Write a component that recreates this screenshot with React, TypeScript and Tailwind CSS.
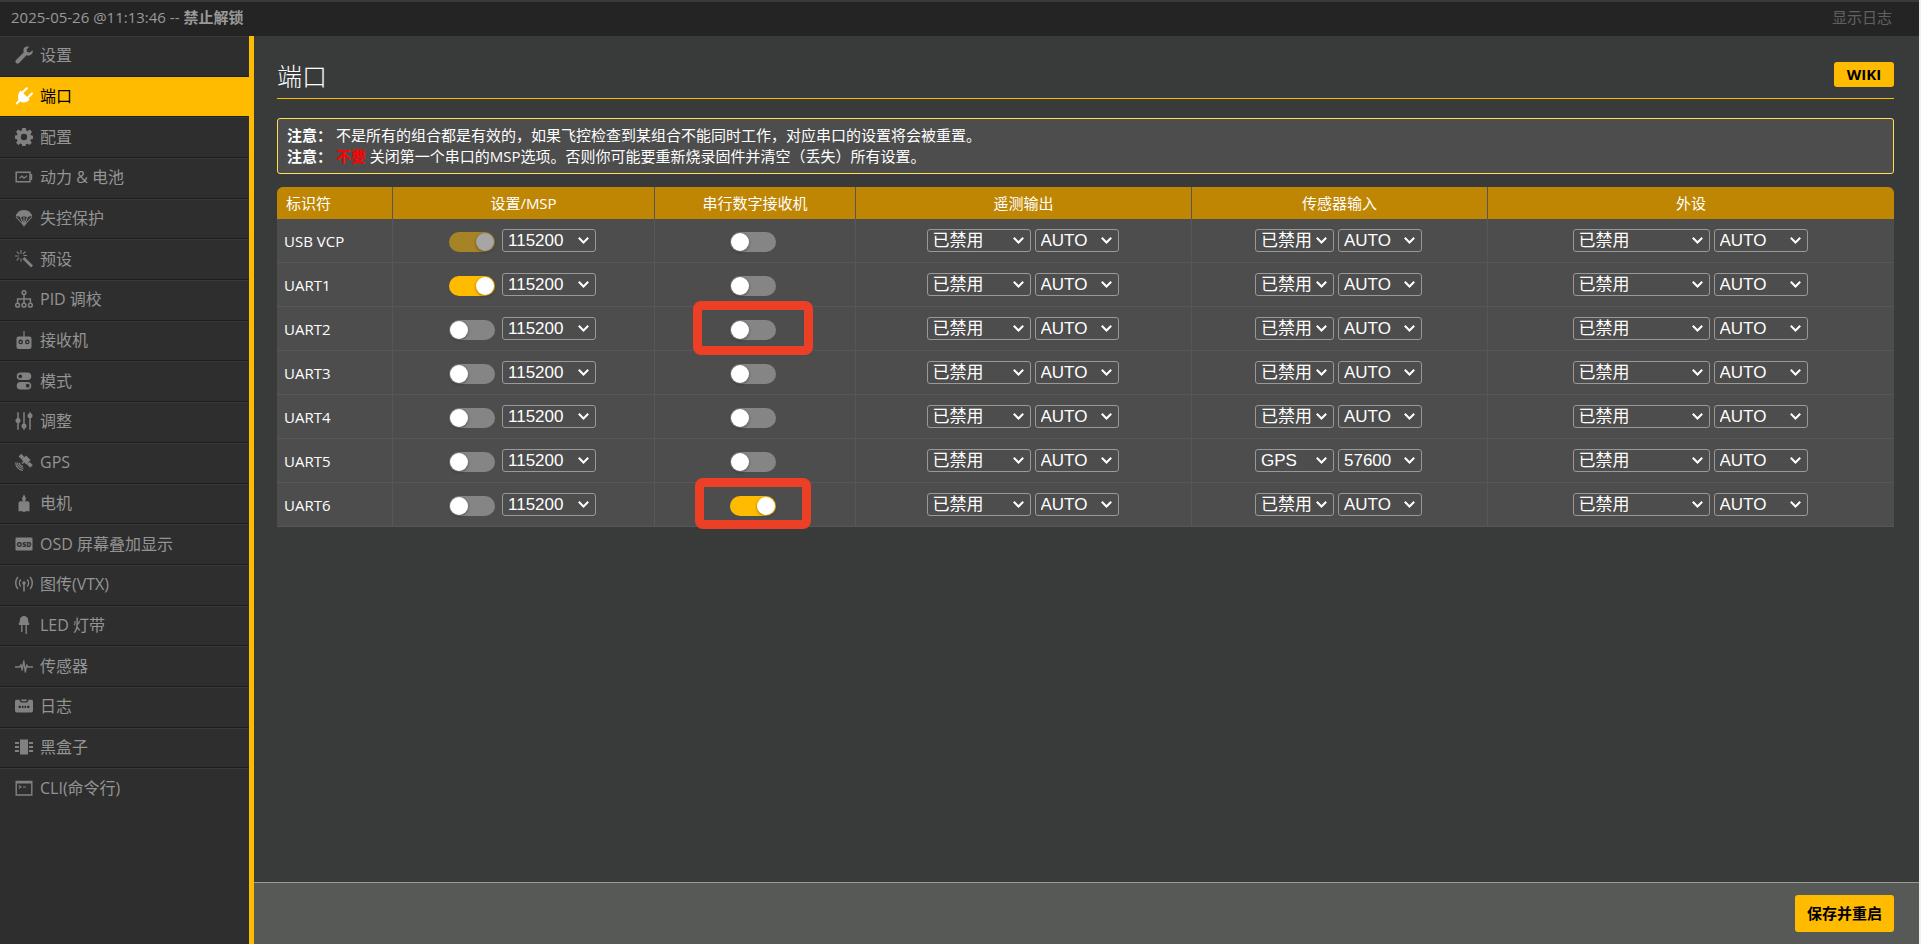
import type { ReactNode } from "react";

type NavItem = {
  label: string;
  icon: ReactNode;
};

type PortRow = {
  id: string;
  msp: boolean;
  mspLocked?: boolean;
  serialRx: boolean;
  sensor: string;
  sensorBaud: string;
  highlight?: string;
};

const navItems: NavItem[] = [
  {
    label: "设置",
    icon: (
      <path d="M17.6 4.2 14.8 6.6 12.2 6 11.6 3.6 14.2.8C12 0 9.6.8 8.7 2.8 8.2 4.1 8.4 5.3 8.8 6.3L1 13.9C.2 14.8.2 16.1 1 16.9 1.9 17.8 3.2 17.8 4.1 16.9L11.5 9.2C13 9.9 15.1 9.7 16.5 8.3 17.7 7.1 18 5.6 17.6 4.2Z" />
    ),
  },
  {
    label: "端口",
    icon: (
      <>
        <path d="M5.6 3.6 14.6 12.4C12.7 15 8.5 16.6 5.2 14.5L2.4 17.2C1.6 17.9.2 16.6.9 15.7L3.5 13C2.3 9.7 3.2 6.1 5.6 3.6Z" />
        <path d="M8 5 11.8 1.3M13.2 10.2 17 6.5" fill="none" stroke="currentColor" strokeWidth="2.2" strokeLinecap="round" />
      </>
    ),
  },
  {
    label: "配置",
    icon: (
      <path
        fillRule="evenodd"
        d="M7.2 0h3.6l.5 2.5 1.4.6L14.9 1.6 17 4 15.5 6l.5 1.3 2 .4v3.1l-2.2.6-.5 1.3 1.5 2.1-2.2 2.3-2.1-1.4-1.5.6-.5 1.7H7.3l-.5-1.9-1.4-.6-2.1 1.4-2.2-2.2 1.4-2.2-.6-1.3L0 10.8V7.6l2-.4.5-1.3L1.1 3.8l2.2-2.2 2 1.5 1.4-.6ZM9 5.8A3.2 3.2 0 1 0 9 12.2 3.2 3.2 0 1 0 9 5.8Z"
      />
    ),
  },
  {
    label: "动力 & 电池",
    icon: (
      <>
        <path d="M1.2 4.2H15V13.8H1.2Z" fill="none" stroke="currentColor" strokeWidth="1.5" />
        <path d="M15.5 6h1.7v6h-1.7Z" />
        <path d="M4.5 10.2 7 8 9 10.2 12 7.8" fill="none" stroke="currentColor" strokeWidth="1.2" />
      </>
    ),
  },
  {
    label: "失控保护",
    icon: (
      <>
        <path d="M.7 7.8C1.2 3.8 4.5 1 9 1s7.8 2.8 8.3 6.8L15 7.2l-2.5 1L9 7.2l-3.5 1L3 7.2Z" />
        <path d="M1.2 8 9 16.5 16.8 8M5.5 8 9 16.5 12.5 8M9 7.5V16" fill="none" stroke="currentColor" strokeWidth="1.1" />
        <path d="M7.4 14.3H10.6L9 17.3Z" />
      </>
    ),
  },
  {
    label: "预设",
    icon: (
      <>
        <path d="M8.5 8 17 16.6" fill="none" stroke="currentColor" strokeWidth="2.8" />
        <path
          d="M6 0V3.8M6 8.5V11.5M0 6H3.5M8.5 5.5H12M1.8 1.7 4.3 4.2M10.5 1.5 8 4M1.6 10.3 4.2 7.7"
          fill="none"
          stroke="currentColor"
          strokeWidth="1.1"
        />
      </>
    ),
  },
  {
    label: "PID 调校",
    icon: (
      <g fill="none" stroke="currentColor" strokeWidth="1.5">
        <circle cx="9" cy="2.6" r="1.9" />
        <circle cx="2.6" cy="15.2" r="1.9" />
        <circle cx="9" cy="15.2" r="1.9" />
        <circle cx="15.4" cy="15.2" r="1.9" />
        <path d="M9 4.5V13.3M2.6 13.3V9H15.4V13.3" />
      </g>
    ),
  },
  {
    label: "接收机",
    icon: (
      <>
        <path d="M9 0V6" stroke="currentColor" strokeWidth="1.2" />
        <path
          fillRule="evenodd"
          d="M3.5 5.5h11a2 2 0 0 1 2 2V16a2 2 0 0 1-2 2h-11a2 2 0 0 1-2-2V7.5a2 2 0 0 1 2-2ZM5.7 8.6a2.3 2.3 0 1 0 0 4.6 2.3 2.3 0 1 0 0-4.6ZM12.3 8.6a2.3 2.3 0 1 0 0 4.6 2.3 2.3 0 1 0 0-4.6Z"
        />
        <circle cx="5.7" cy="10.9" r="1" />
        <circle cx="12.3" cy="10.9" r="1" />
      </>
    ),
  },
  {
    label: "模式",
    icon: (
      <path
        fillRule="evenodd"
        d="M5.5.5h7a3.8 3.8 0 0 1 0 7.6h-7a3.8 3.8 0 0 1 0-7.6ZM5.3 2.4a1.9 1.9 0 1 0 0 3.8 1.9 1.9 0 1 0 0-3.8ZM5.5 9.9h7a3.8 3.8 0 0 1 0 7.6h-7a3.8 3.8 0 0 1 0-7.6ZM12.7 11.8a1.9 1.9 0 1 0 0 3.8 1.9 1.9 0 1 0 0-3.8Z"
      />
    ),
  },
  {
    label: "调整",
    icon: (
      <>
        <path d="M3 .3V17.7M9 .3V17.7M15 .3V17.7" stroke="currentColor" strokeWidth="1.5" />
        <circle cx="3" cy="8.5" r="2.5" />
        <circle cx="9" cy="14" r="2.5" />
        <circle cx="15" cy="3.8" r="2.5" />
      </>
    ),
  },
  {
    label: "GPS",
    icon: (
      <>
        <path d="M6.2.8 9.4 4 6.8 6.6 3.6 3.4ZM14.6 8.9l3.2 3.2-2.6 2.6-3.2-3.2ZM11 2.5l4.6 4.6-4.2 4.5L6.8 7Z" />
        <path d="M7.5 5.2 13 10.7M7 10.5 10 8" stroke="currentColor" strokeWidth="1.6" />
        <path
          d="M4.5 9.8A3.6 3.6 0 0 0 8 13.4M2.5 9.5A6 6 0 0 0 8.3 15.4M.7 9.5A8 8 0 0 0 8 17.4"
          fill="none"
          stroke="currentColor"
          strokeWidth="1.2"
        />
      </>
    ),
  },
  {
    label: "电机",
    icon: (
      <>
        <path d="M9 .2 11 4.5 10.2 7.5H7.8L7 4.5Z" />
        <path d="M5.5 7.3h7a2 2 0 0 1 2 2v8h-11v-8a2 2 0 0 1 2-2ZM8 17h2v1H8Z" />
      </>
    ),
  },
  {
    label: "OSD 屏幕叠加显示",
    icon: (
      <>
        <rect x="0.5" y="2.5" width="17" height="13" rx="1.2" />
        <text x="9" y="11.8" textAnchor="middle" className="fill-[#2e2e2e] font-['Open_Sans'] text-[7px] font-extrabold">
          OSD
        </text>
      </>
    ),
  },
  {
    label: "图传(VTX)",
    icon: (
      <>
        <circle cx="9" cy="8" r="1.8" />
        <path d="M9 9V16.5" stroke="currentColor" strokeWidth="1.6" />
        <path
          d="M5.8 4.6A5 5 0 0 0 5.8 11.4M12.2 4.6A5 5 0 0 1 12.2 11.4M3 2A9 9 0 0 0 3 14M15 2A9 9 0 0 1 15 14"
          fill="none"
          stroke="currentColor"
          strokeWidth="1.5"
        />
      </>
    ),
  },
  {
    label: "LED 灯带",
    icon: (
      <>
        <path d="M4.8 6.5V4.2a4.2 4.2 0 0 1 8.4 0V6.5h1V9H3.8V6.5Z" />
        <path d="M6.8 9V16M11.2 9V18" stroke="currentColor" strokeWidth="1.4" />
      </>
    ),
  },
  {
    label: "传感器",
    icon: (
      <path
        d="M0 10H4.8L6 7.6 7.2 13 8.8 4 10.3 15 11.8 8 12.8 10H18"
        fill="none"
        stroke="currentColor"
        strokeWidth="1.4"
        strokeLinejoin="round"
      />
    ),
  },
  {
    label: "日志",
    icon: (
      <>
        <path
          fillRule="evenodd"
          d="M1.5 2.8h2.7L5.8 5.5h6.4l1.6-2.7h2.7A1.5 1.5 0 0 1 18 4.3V13.5a2 2 0 0 1-2 2H2a2 2 0 0 1-2-2V4.3a1.5 1.5 0 0 1 1.5-1.5ZM3.6 8.8v2.2h2.2V8.8ZM6.9 8.8v2.2h1.6V8.8ZM9.5 8.8v2.2h1.6V8.8ZM12.2 8.8v2.2h2.2V8.8Z"
        />
        <path d="M6 2.5H12L11.3 4.3H6.7Z" />
      </>
    ),
  },
  {
    label: "黑盒子",
    icon: (
      <>
        <rect x="5" y="1.5" width="8" height="15" />
        <path d="M0 5H4M0 9H4M0 13H4M14 5H18M14 9H18M14 13H18" stroke="currentColor" strokeWidth="1.8" />
      </>
    ),
  },
  {
    label: "CLI(命令行)",
    icon: (
      <>
        <path d="M1.2 2.5H16.8V16H1.2Z" fill="none" stroke="currentColor" strokeWidth="1.4" />
        <path d="M1 2H17V4.5H1Z" />
        <path d="M3.8 6.5 6 8 3.8 9.5M8 8H11" fill="none" stroke="currentColor" strokeWidth="1.1" />
      </>
    ),
  },
];

const ports: PortRow[] = [
  { id: "USB VCP", msp: true, mspLocked: true, serialRx: false, sensor: "已禁用", sensorBaud: "AUTO" },
  { id: "UART1", msp: true, serialRx: false, sensor: "已禁用", sensorBaud: "AUTO" },
  {
    id: "UART2",
    msp: false,
    serialRx: false,
    sensor: "已禁用",
    sensorBaud: "AUTO",
    highlight: "-left-[37px] -right-[37px] -top-[19px] -bottom-[15px]",
  },
  { id: "UART3", msp: false, serialRx: false, sensor: "已禁用", sensorBaud: "AUTO" },
  { id: "UART4", msp: false, serialRx: false, sensor: "已禁用", sensorBaud: "AUTO" },
  { id: "UART5", msp: false, serialRx: false, sensor: "GPS", sensorBaud: "57600" },
  {
    id: "UART6",
    msp: false,
    serialRx: true,
    sensor: "已禁用",
    sensorBaud: "AUTO",
    highlight: "-left-[35px] -right-[35px] -top-[18px] -bottom-[13px]",
  },
];

function Toggle({
  label,
  checked,
  disabled = false,
  highlight,
}: {
  label: string;
  checked: boolean;
  disabled?: boolean;
  highlight?: string;
}) {
  return (
    <label className="relative mr-[3px] block h-5 w-[46px]">
      <input
        type="checkbox"
        aria-label={label}
        defaultChecked={checked}
        disabled={disabled}
        className="peer block h-5 w-[46px] appearance-none rounded-full bg-[#858585] checked:bg-[#ffbb00] disabled:opacity-50"
      />
      <span className="pointer-events-none absolute left-px top-px size-[18px] rounded-full bg-white shadow-[0_1px_3px_rgba(0,0,0,0.4)] peer-checked:left-[27px] peer-disabled:bg-[#a6a6a6]" />
      {highlight ? (
        <span className={`pointer-events-none absolute z-10 rounded-lg border-9 border-[#ec4026] ${highlight}`} />
      ) : null}
    </label>
  );
}

function Select({ label, value, width }: { label: string; value: string; width: string }) {
  return (
    <div className={`relative h-[23px] ${width}`}>
      <select
        aria-label={label}
        defaultValue={value}
        className="block h-full w-full appearance-none rounded-[3px] border border-[#999] bg-[#4d4d4d] pl-[5px] font-['Liberation_Sans','Noto_Sans_CJK_SC',sans-serif] text-[17px] leading-5 text-white"
      >
        <option>{value}</option>
      </select>
      <svg
        viewBox="0 0 11 7"
        aria-hidden="true"
        className="pointer-events-none absolute right-[7px] top-2 h-[7px] w-[11px] fill-none stroke-white stroke-2"
      >
        <path d="M.8.8 5.5 5.5 10.2.8" />
      </svg>
    </div>
  );
}

function Cell({ children }: { children: ReactNode }) {
  return (
    <td className="border-b border-l border-[#575757] py-0 pl-0 pr-[2px]">
      <div className="flex h-[23px] items-end justify-center gap-1">{children}</div>
    </td>
  );
}

export default function App() {
  return (
    <div className="flex min-h-screen flex-col border-r-2 border-[#f0f0f0] bg-[#393b3a] font-['Open_Sans','Noto_Sans_CJK_SC',sans-serif] text-[15px] text-white">
      <header className="flex h-9 items-center justify-between border-t-2 border-[#393939] bg-[#242424] pb-[3px] pl-[11px] pr-[27px]">
        <p className="text-[#999]">
          2025-05-26 @11:13:46 -- <strong>禁止解锁</strong>
        </p>
        <button type="button" className="text-[#616161]">
          显示日志
        </button>
      </header>

      <div className="flex flex-1">
        <nav className="w-[254px] shrink-0 border-r-5 border-[#ffbb00] bg-[#2e2e2e]">
          <ul className="grid h-[773px] auto-rows-fr">
            {navItems.map((item, index) => (
              <li
                key={item.label}
                className={
                  index === 1
                    ? "border-b border-[#1e1e1e] bg-[#ffbb00] text-black"
                    : "border-b border-t border-b-[#1e1e1e] border-t-[#393939] text-[#949494] last:border-b-transparent"
                }
              >
                <a href="#" className="flex h-full items-center gap-[7px] pb-[2px] pl-[15px] text-base">
                  <svg
                    viewBox="0 0 18 18"
                    aria-hidden="true"
                    className={index === 1 ? "size-[18px] fill-current text-white" : "size-[18px] fill-current text-[#818181]"}
                  >
                    {item.icon}
                  </svg>
                  {item.label}
                </a>
              </li>
            ))}
          </ul>
        </nav>

        <div className="flex min-w-0 flex-1 flex-col">
          <main className="flex-1 pl-[23px] pr-[25px] pt-5">
            <div className="flex h-[43px] items-center justify-between border-b border-[#ffbb00] pb-[5px]">
              <h1 className="pt-[5px] text-[25px] font-light">端口</h1>
              <a
                href="#"
                className="flex h-[25px] w-[60px] items-center justify-center rounded-[3px] bg-[#ffbb00] text-[15px] font-bold text-black"
              >
                WIKI
              </a>
            </div>

            <div className="mt-[19px] rounded-[3px] border border-[#ffe055] bg-[#4d4d4d] px-[9px] py-[6px] leading-[21px]">
              <p>
                <strong>注意：</strong> 不是所有的组合都是有效的，如果飞控检查到某组合不能同时工作，对应串口的设置将会被重置。
              </p>
              <p>
                <strong>注意：</strong> <strong className="text-[#ff0000]">不要</strong>{" "}
                关闭第一个串口的MSP选项。否则你可能要重新烧录固件并清空（丢失）所有设置。
              </p>
            </div>

            <table className="mt-[13px] w-full table-fixed border-separate border-spacing-0 rounded-t-md bg-[#4d4d4d]">
              <colgroup>
                <col className="w-[115px]" />
                <col className="w-[262px]" />
                <col className="w-[201px]" />
                <col className="w-[336px]" />
                <col className="w-[296px]" />
                <col />
              </colgroup>
              <thead>
                <tr className="h-8 [&>th]:bg-[#bf8604] [&>th]:p-0 [&>th]:font-normal">
                  <th className="rounded-tl-md text-left">
                    <span className="pl-[9px]">标识符</span>
                  </th>
                  <th className="border-l border-[#575757]">设置/MSP</th>
                  <th className="border-l border-[#575757]">串行数字接收机</th>
                  <th className="border-l border-[#575757]">遥测输出</th>
                  <th className="border-l border-[#575757]">传感器输入</th>
                  <th className="rounded-tr-md border-l border-[#575757]">外设</th>
                </tr>
              </thead>
              <tbody>
                {ports.map((port) => (
                  <tr key={port.id} className="h-11">
                    <td className="border-b border-[#575757] pb-0 pl-[7px] pr-0 pt-[2px]">{port.id}</td>
                    <Cell>
                      <Toggle label={`${port.id} MSP`} checked={port.msp} disabled={port.mspLocked} />
                      <Select label={`${port.id} MSP 波特率`} value="115200" width="w-[94px]" />
                    </Cell>
                    <Cell>
                      <Toggle label={`${port.id} 串行数字接收机`} checked={port.serialRx} highlight={port.highlight} />
                    </Cell>
                    <Cell>
                      <Select label={`${port.id} 遥测输出`} value="已禁用" width="w-[104px]" />
                      <Select label={`${port.id} 遥测输出波特率`} value="AUTO" width="w-[84px]" />
                    </Cell>
                    <Cell>
                      <Select label={`${port.id} 传感器输入`} value={port.sensor} width="w-[79px]" />
                      <Select label={`${port.id} 传感器输入波特率`} value={port.sensorBaud} width="w-[84px]" />
                    </Cell>
                    <Cell>
                      <Select label={`${port.id} 外设`} value="已禁用" width="w-[137px]" />
                      <Select label={`${port.id} 外设波特率`} value="AUTO" width="w-[94px]" />
                    </Cell>
                  </tr>
                ))}
              </tbody>
            </table>
          </main>

          <footer className="flex h-[62px] items-center justify-end border-t border-[#999] bg-[#575957] pr-[25px]">
            <button type="button" className="h-[37px] rounded-[3px] bg-[#ffbb00] px-3 font-bold text-black">
              保存并重启
            </button>
          </footer>
        </div>
      </div>
    </div>
  );
}
